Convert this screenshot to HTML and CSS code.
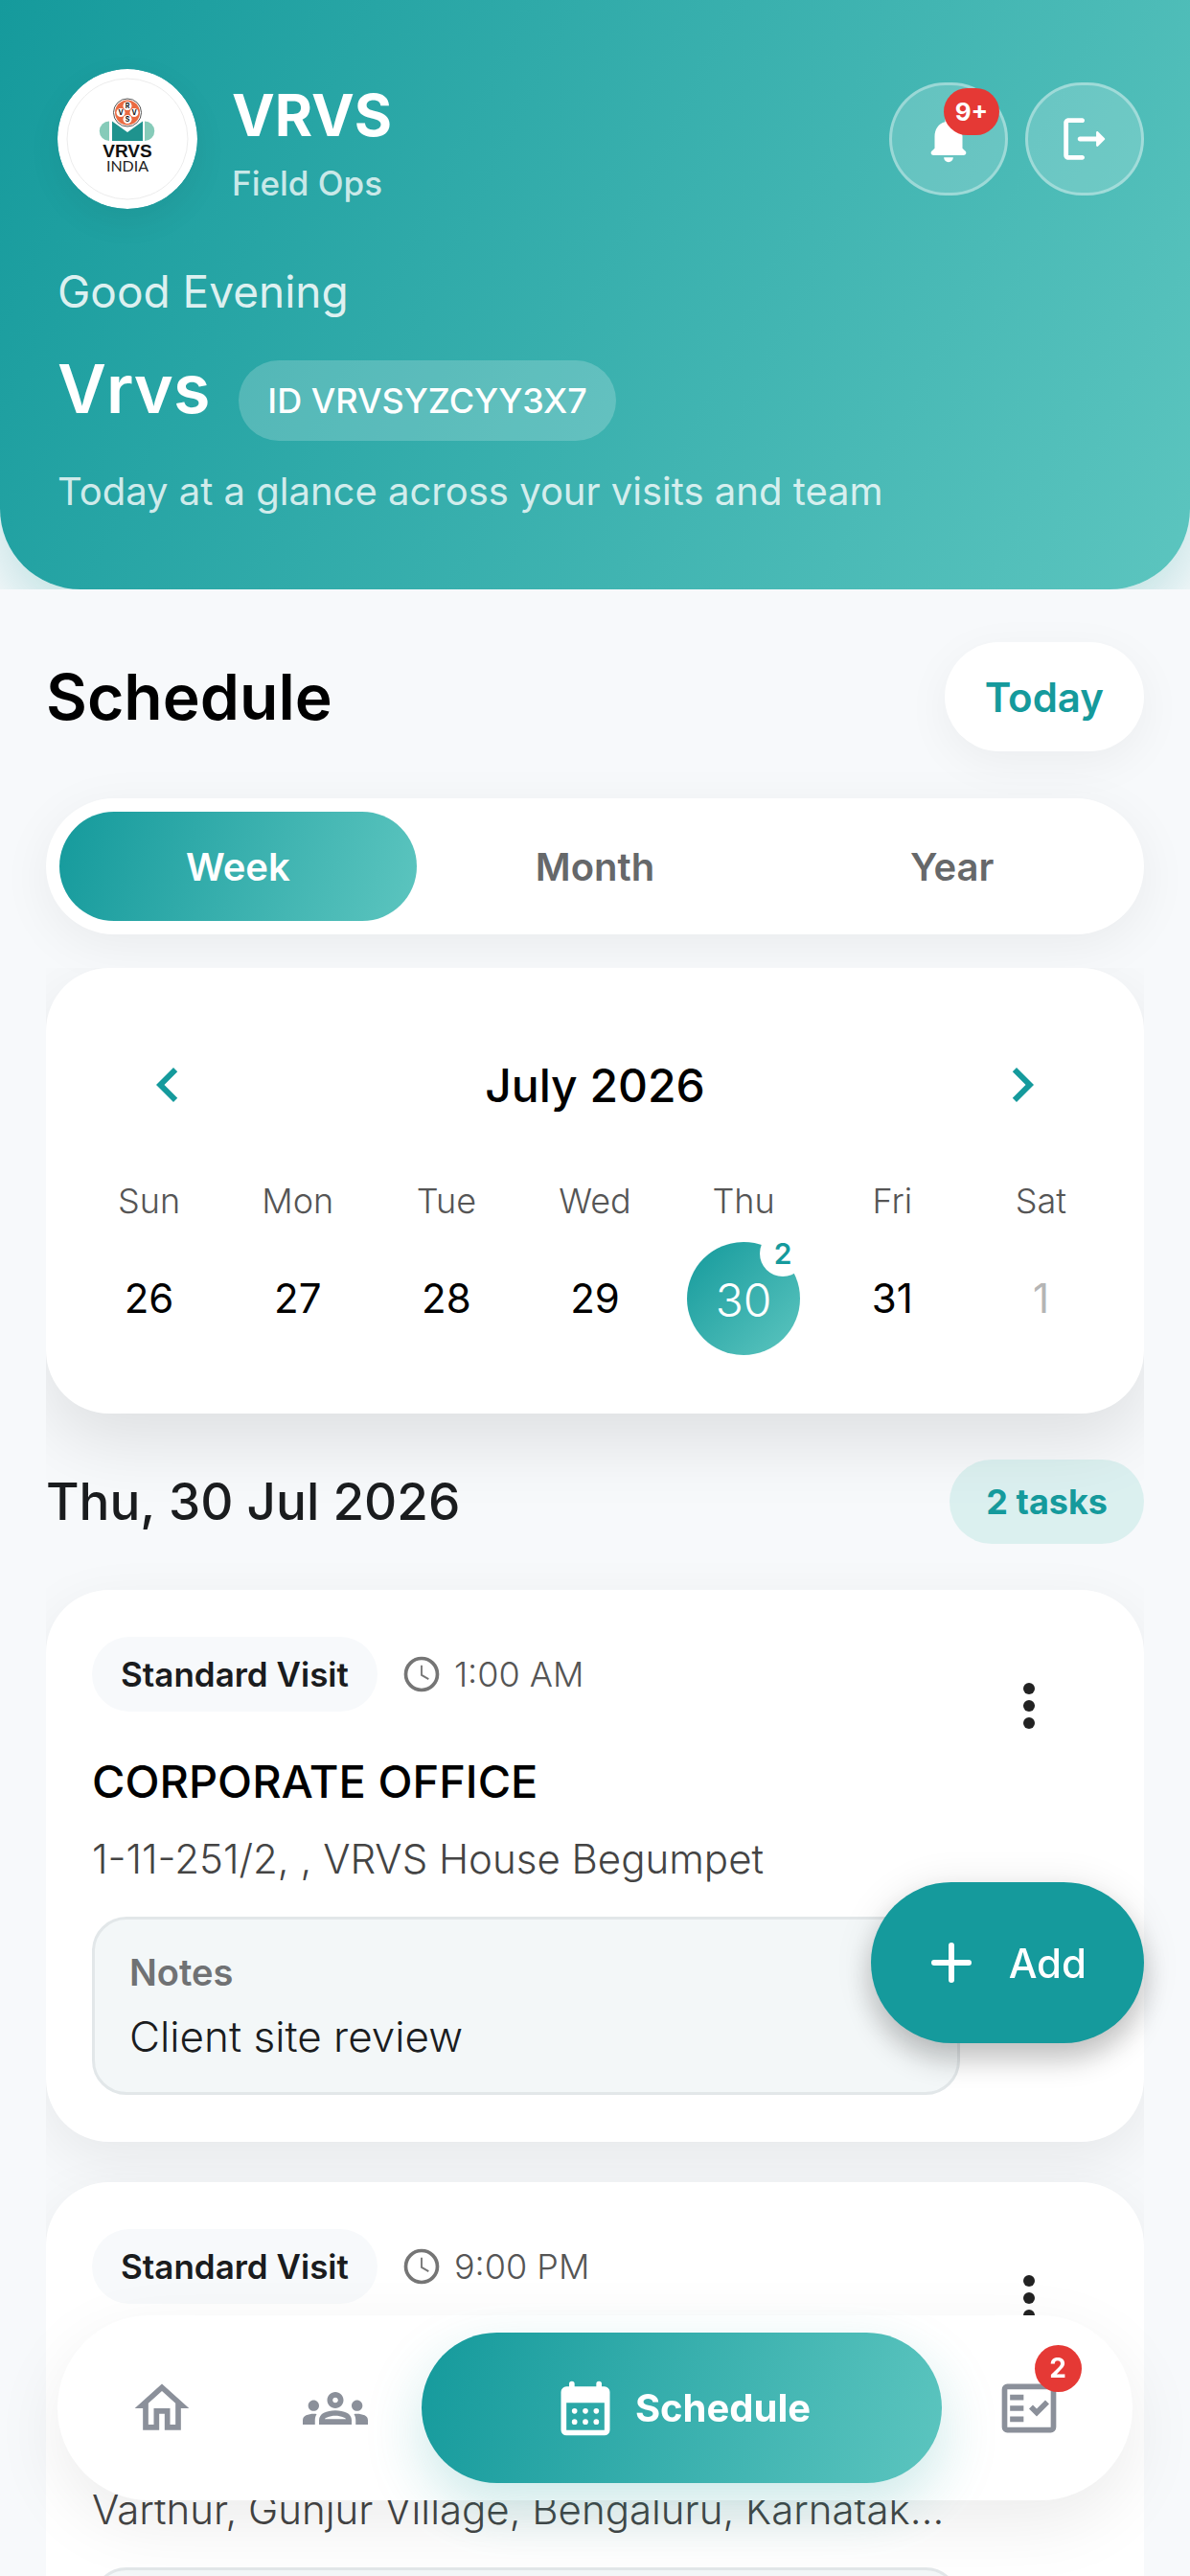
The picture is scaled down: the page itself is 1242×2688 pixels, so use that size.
FILE: index.html
```html
<!DOCTYPE html>
<html lang="en">
<head>
  <meta charset="UTF-8" />
  <meta name="viewport" content="width=device-width, initial-scale=1.0"/>
  <title>Schedule - VRVS Field Ops</title>
  <link rel="stylesheet" href="styles.css">
</head>
<body>

<header class="top">
  <div class="hero">
    <div class="brand-row">
      <svg class="logo" viewBox="0 0 146 146" role="img" aria-label="VRVS India">
        <circle cx="73" cy="73" r="73" fill="#fff"/>
        <circle cx="73" cy="73" r="63" fill="none" stroke="#ececec" stroke-width="1"/>
        <path d="M54 54.500v20.500a10 10 0 0 1 0-20.500z" fill="#86cbb9"/>
        <path d="M91 54.500v20.500a10 10 0 0 0 0-20.500z" fill="#86cbb9"/>
        <path d="M57 54.500L73 66l16-11.500V75H57z" fill="#1f938e"/>
        <circle cx="73" cy="45.500" r="14.500" fill="#fff" stroke="#555" stroke-width="1"/>
        <circle cx="73" cy="45.500" r="13" fill="#ea6a41"/>
        <circle cx="73" cy="38.500" r="4.500" fill="#fff"/>
        <circle cx="66" cy="45.500" r="4.500" fill="#fff"/>
        <circle cx="80" cy="45.500" r="4.500" fill="#fff"/>
        <circle cx="73" cy="52.500" r="4.500" fill="#fff"/>
        <g class="logo-mini">
          <text x="73" y="41">R</text>
          <text x="66" y="48">V</text>
          <text x="80" y="48">V</text>
          <text x="73" y="55">S</text>
        </g>
        <text class="logo-name" x="73" y="92">VRVS</text>
        <text class="logo-country" x="73" y="107">INDIA</text>
      </svg>
      <div class="brand">
        <div class="brand-name">VRVS</div>
        <div class="brand-sub">Field Ops</div>
      </div>
      <div class="actions">
        <button class="round-btn" aria-label="Notifications">
          <svg class="icon-sm" viewBox="0 0 24 24"><path d="M12 22c1.100 0 2-.9 2-2h-4c0 1.100.89 2 2 2zm6-6v-5c0-3.070-1.640-5.640-4.500-6.320V4c0-.83-.67-1.500-1.500-1.500s-1.500.67-1.500 1.500v.68C7.630 5.360 6 7.920 6 11v5l-1.290 1.290c-.63.63-.19 1.710.7 1.710h13.170c.89 0 1.340-1.080.71-1.710L18 16z"/></svg>
          <span class="badge badge-bell">9+</span>
        </button>
        <button class="round-btn" aria-label="Log out">
          <svg class="icon-sm" viewBox="0 0 24 24"><path d="M5 5h6c.55 0 1-.45 1-1s-.45-1-1-1H5c-1.100 0-2 .9-2 2v14c0 1.100.9 2 2 2h6c.55 0 1-.45 1-1s-.45-1-1-1H5V5z"/><path d="M20.650 11.650l-2.790-2.790c-.32-.32-.86-.1-.86.35V11h-7c-.55 0-1 .45-1 1s.45 1 1 1h7v1.790c0 .45.54.67.85.35l2.790-2.790c.2-.19.2-.51.010-.7z"/></svg>
        </button>
      </div>
    </div>
    <p class="greeting">Good Evening</p>
    <div class="user-row">
      <h1 class="user-name">Vrvs</h1>
      <span class="user-id">ID VRVSYZCYY3X7</span>
    </div>
    <p class="tagline">Today at a glance across your visits and team</p>
  </div>
</header>

<main class="page">
  <div class="title-row">
    <h2 class="page-title">Schedule</h2>
    <button class="today-btn">Today</button>
  </div>

  <div class="segment">
    <button class="seg active">Week</button>
    <button class="seg">Month</button>
    <button class="seg">Year</button>
  </div>

  <div class="feed">
    <section class="calendar">
      <div class="month-row">
        <button class="icon-btn" aria-label="Previous week"><svg class="icon-lg" viewBox="0 0 24 24"><path d="M15.410 7.410L14 6l-6 6 6 6 1.410-1.410L10.830 12z"/></svg></button>
        <h3 class="month">July 2026</h3>
        <button class="icon-btn" aria-label="Next week"><svg class="icon-lg" viewBox="0 0 24 24"><path d="M8.590 7.410L10 6l6 6-6 6-1.410-1.410L13.170 12z"/></svg></button>
      </div>
      <table class="week">
        <thead>
          <tr><th>Sun</th><th>Mon</th><th>Tue</th><th>Wed</th><th>Thu</th><th>Fri</th><th>Sat</th></tr>
        </thead>
        <tbody>
          <tr>
            <td>26</td>
            <td>27</td>
            <td>28</td>
            <td>29</td>
            <td><div class="selected">30<span class="day-count">2</span></div></td>
            <td>31</td>
            <td class="outside">1</td>
          </tr>
        </tbody>
      </table>
    </section>

    <div class="date-row">
      <h3 class="date">Thu, 30 Jul 2026</h3>
      <span class="task-count">2 tasks</span>
    </div>

    <article class="visit">
      <div class="visit-body">
        <div class="visit-meta">
          <span class="chip">Standard Visit</span>
          <svg class="clock" viewBox="0 0 24 24"><circle cx="12" cy="12" r="9"/><path d="M12 7v5.500l4 2.300"/></svg>
          <span class="time">1:00 AM</span>
        </div>
        <h4 class="visit-title">CORPORATE OFFICE</h4>
        <p class="address">1-11-251/2, , VRVS House Begumpet</p>
        <div class="notes">
          <div class="notes-label">Notes</div>
          <div class="notes-text">Client site review</div>
        </div>
      </div>
      <button class="menu-btn" aria-label="More"><svg class="icon-lg" viewBox="0 0 24 24"><circle cx="12" cy="6" r="2"/><circle cx="12" cy="12" r="2"/><circle cx="12" cy="18" r="2"/></svg></button>
    </article>

    <article class="visit">
      <div class="visit-body">
        <div class="visit-meta">
          <span class="chip">Standard Visit</span>
          <svg class="clock" viewBox="0 0 24 24"><circle cx="12" cy="12" r="9"/><path d="M12 7v5.500l4 2.300"/></svg>
          <span class="time">9:00 PM</span>
        </div>
        <div class="visit-title two-line"></div>
        <p class="address">Varthur, Gunjur Village, Bengaluru, Karnatak…</p>
        <div class="notes"></div>
      </div>
      <button class="menu-btn" aria-label="More"><svg class="icon-lg" viewBox="0 0 24 24"><circle cx="12" cy="6" r="2"/><circle cx="12" cy="12" r="2"/><circle cx="12" cy="18" r="2"/></svg></button>
    </article>
  </div>
</main>

<button class="fab">
  <svg class="icon-lg" viewBox="0 0 24 24"><path d="M12 6v12M6 12h12"/></svg>
  Add
</button>

<nav class="tabbar">
  <a class="tab" href="#" aria-label="Home">
    <svg class="icon-md" viewBox="0 0 24 24"><path d="M12 5.690l5 4.500V18h-2v-6H9v6H7v-7.810l5-4.500M12 3L2 12h3v8h6v-6h2v6h6v-8h3L12 3z"/></svg>
  </a>
  <a class="tab" href="#" aria-label="Team">
    <svg class="icon-md" viewBox="0 0 24 24"><path d="M4 13c1.100 0 2-.9 2-2s-.9-2-2-2-2 .9-2 2 .9 2 2 2zm1.130 1.100c-.37-.06-.74-.1-1.130-.1-.99 0-1.930.21-2.780.58C.48 14.900 0 15.620 0 16.430V18h4.500v-1.610c0-.83.23-1.610.63-2.290zM20 13c1.100 0 2-.9 2-2s-.9-2-2-2-2 .9-2 2 .9 2 2 2zm4 3.430c0-.81-.48-1.530-1.220-1.850-.85-.37-1.790-.58-2.780-.58-.39 0-.76.04-1.130.1.4.68.63 1.460.63 2.290V18H24v-1.570zm-7.760-2.780c-1.170-.52-2.610-.9-4.240-.9s-3.070.39-4.240.9C6.680 14.130 6 15.210 6 16.390V18h12v-1.610c0-1.180-.68-2.260-1.760-2.740zM8.070 16c.09-.23.13-.39.91-.69.97-.38 1.990-.56 3.020-.56s2.050.18 3.020.56c.77.3.81.46.91.69H8.070zM12 8c.55 0 1 .45 1 1s-.45 1-1 1-1-.45-1-1 .45-1 1-1m0-2c-1.660 0-3 1.340-3 3s1.340 3 3 3 3-1.340 3-3-1.340-3-3-3z"/></svg>
  </a>
  <a class="tab current" href="#">
    <svg class="icon-md" viewBox="0 0 24 24"><path fill-rule="evenodd" d="M8 4h8V3a1 1 0 0 1 2 0v1h1a2 2 0 0 1 2 2v14a2 2 0 0 1-2 2H5a2 2 0 0 1-2-2V6a2 2 0 0 1 2-2h1V3a1 1 0 0 1 2 0zM5 10v10h14V10z"/><circle cx="8" cy="13" r="1"/><circle cx="12" cy="13" r="1"/><circle cx="16" cy="13" r="1"/><circle cx="8" cy="17" r="1"/><circle cx="12" cy="17" r="1"/><circle cx="16" cy="17" r="1"/></svg>
    Schedule
  </a>
  <a class="tab" href="#" aria-label="Tasks">
    <span class="tab-icon">
      <svg class="icon-md" viewBox="0 0 24 24"><path fill-rule="evenodd" d="M4 3h16a2 2 0 0 1 2 2v14a2 2 0 0 1-2 2H4a2 2 0 0 1-2-2V5a2 2 0 0 1 2-2zM4 5v14h16V5z"/><path d="M5 7h5v2H5zM5 11h5v2H5zM5 15h5v2H5zM19.410 10.420L17.990 9l-3.170 3.170-1.410-1.420L12 12.160 14.820 15z"/></svg>
      <span class="badge badge-tab">2</span>
    </span>
  </a>
</nav>

</body>
</html>
```
FILE: styles.css
```css
* {
  box-sizing: border-box;
  margin: 0;
  padding: 0;
}
body {
  font-family: Inter, "Noto Sans", sans-serif;
  background: #f7f9fb;
  color: #000;
  height: 100vh;
  overflow: hidden;
}
button {
  font: inherit;
  border: none;
  background: none;
  cursor: pointer;
}
a {
  text-decoration: none;
}
svg {
  display: block;
  flex: none;
  fill: currentColor;
}
.icon-sm {
  width: 58px;
  height: 58px;
}
.icon-md {
  width: 68px;
  height: 68px;
}
.icon-lg {
  width: 72px;
  height: 72px;
}

/* header */
.top {
  overflow: hidden;
}
.hero {
  padding: 72px 48px 77px 60px;
  color: #fff;
  background: linear-gradient(116deg, #159a9c, #5cc5bf);
  border-radius: 0 0 84px 84px;
  box-shadow: 0 24px 60px rgba(21, 154, 156, 0.25);
}
.brand-row {
  display: flex;
  align-items: center;
}
.logo {
  width: 146px;
  height: 146px;
  border-radius: 50%;
  box-shadow: 0 12px 36px rgba(0, 0, 0, 0.06);
}
.logo-mini {
  font-size: 7px;
  font-weight: 700;
  text-anchor: middle;
  fill: #111;
}
.logo-name {
  font-family: "Liberation Sans", sans-serif;
  font-size: 19px;
  font-weight: 700;
  text-anchor: middle;
  fill: #111;
}
.logo-country {
  font-family: Lato, sans-serif;
  font-size: 16px;
  text-anchor: middle;
  fill: #222;
}
.brand {
  flex: 1;
  margin-left: 36px;
}
.brand-name {
  font-size: 60px;
  font-weight: 700;
  line-height: 86px;
}
.brand-sub {
  margin-top: 6px;
  font-size: 35px;
  font-weight: 500;
  line-height: 44px;
  color: rgba(255, 255, 255, 0.75);
}
.actions {
  display: flex;
  gap: 18px;
}
.round-btn {
  position: relative;
  display: flex;
  align-items: center;
  justify-content: center;
  width: 124px;
  height: 118px;
  color: #fff;
  background: rgba(255, 255, 255, 0.18);
  border: 3px solid rgba(255, 255, 255, 0.35);
  border-radius: 60px;
}
.badge {
  position: absolute;
  height: 49px;
  font-weight: 700;
  line-height: 49px;
  text-align: center;
  color: #fff;
  background: #e53935;
  border-radius: 25px;
}
.badge-bell {
  top: 3px;
  right: 6px;
  width: 58px;
  font-size: 26px;
}
.greeting {
  margin-top: 56px;
  font-size: 46px;
  line-height: 60px;
  color: rgba(255, 255, 255, 0.85);
}
.user-row {
  display: flex;
  align-items: flex-end;
  gap: 30px;
  margin-top: 24px;
}
.user-name {
  margin-bottom: 6px;
  font-size: 70px;
  font-weight: 600;
  line-height: 96px;
}
.user-id {
  padding: 0 30px;
  font-size: 36px;
  font-weight: 500;
  line-height: 84px;
  background: rgba(255, 255, 255, 0.2);
  border-radius: 42px;
}
.tagline {
  margin-top: 28px;
  font-size: 40px;
  line-height: 50px;
  color: rgba(255, 255, 255, 0.8);
}

/* schedule controls */
.page {
  padding: 55px 48px 0;
}
.title-row {
  display: flex;
  align-items: center;
  justify-content: space-between;
}
.page-title {
  font-size: 66px;
  font-weight: 600;
}
.today-btn {
  height: 114px;
  padding: 0 42px;
  font-size: 42px;
  font-weight: 600;
  color: #159a9c;
  background: #fff;
  border-radius: 57px;
  box-shadow: 0 12px 48px rgba(0, 0, 0, 0.05);
}
.segment {
  display: flex;
  margin-top: 49px;
  padding: 14px;
  background: #fff;
  border-radius: 71px;
  box-shadow: 0 12px 54px rgba(0, 0, 0, 0.06);
}
.seg {
  flex: 1;
  height: 114px;
  font-size: 40px;
  font-weight: 600;
  color: #66686a;
  border-radius: 57px;
}
.seg.active {
  color: #fff;
  background: linear-gradient(107deg, #159a9c, #5cc5bf);
}

/* calendar */
.feed {
  margin-top: 35px;
  overflow: hidden;
}
.calendar {
  padding: 64px 30px 49px;
  background: #fff;
  border-radius: 66px;
  box-shadow: 0 30px 72px rgba(0, 0, 0, 0.1);
}
.month-row {
  display: flex;
  align-items: center;
  justify-content: space-between;
  padding: 0 39px;
}
.icon-btn {
  display: flex;
  align-items: center;
  justify-content: center;
  width: 116px;
  height: 116px;
  color: #159a9c;
}
.month {
  font-size: 48px;
  font-weight: 500;
}
.week {
  width: 100%;
  margin-top: 33px;
  table-layout: fixed;
  border-collapse: collapse;
  text-align: center;
}
.week th {
  height: 60px;
  font-size: 36px;
  font-weight: 300;
  color: #555;
}
.week td {
  height: 143px;
  font-size: 42px;
}
.week .outside {
  color: #b5b5b5;
}
.selected {
  position: relative;
  width: 118px;
  height: 118px;
  margin: 0 auto;
  font-size: 48px;
  font-weight: 300;
  line-height: 122px;
  color: #fff;
  background: linear-gradient(135deg, #159a9c, #5cc5bf);
  border-radius: 50%;
}
.day-count {
  position: absolute;
  top: -12px;
  right: -6px;
  width: 48px;
  height: 48px;
  font-size: 30px;
  font-weight: 600;
  line-height: 48px;
  color: #159a9c;
  background: #fff;
  border-radius: 50%;
}

/* visits */
.date-row {
  display: flex;
  align-items: center;
  justify-content: space-between;
  margin: 48px 0;
}
.date {
  font-size: 53px;
  font-weight: 500;
  color: #1a1c1e;
}
.task-count {
  padding: 0 38px;
  font-size: 36px;
  font-weight: 700;
  line-height: 88px;
  color: #159a9c;
  background: rgba(92, 197, 191, 0.18);
  border-radius: 44px;
}
.visit {
  display: grid;
  grid-template-columns: minmax(0, 1fr) 144px;
  align-items: start;
  margin-bottom: 42px;
  padding: 49px 48px;
  background: #fff;
  border-radius: 66px;
  box-shadow: 0 18px 60px rgba(0, 0, 0, 0.07);
}
.visit-meta {
  display: flex;
  align-items: center;
}
.chip {
  padding: 0 30px;
  font-size: 35px;
  font-weight: 600;
  line-height: 78px;
  color: #1a1c1e;
  background: #f7f9fb;
  border-radius: 39px;
}
.clock {
  width: 44px;
  height: 44px;
  margin: 0 12px 0 24px;
  fill: none;
  stroke: #757575;
  stroke-width: 2;
}
.clock path {
  stroke-width: 1;
}
.time {
  font-size: 36px;
  font-weight: 300;
  color: #555;
}
.visit-title {
  margin-top: 42px;
  font-size: 47px;
  font-weight: 500;
  line-height: 61px;
}
.two-line {
  min-height: 122px;
}
.address {
  margin-top: 21px;
  overflow: hidden;
  font-size: 42px;
  font-weight: 300;
  line-height: 60px;
  white-space: nowrap;
  text-overflow: ellipsis;
  color: #444;
}
.notes {
  min-height: 186px;
  margin-top: 30px;
  padding: 30px 36px;
  background: #f3f7f8;
  border: 3px solid #e2e7e9;
  border-radius: 36px;
}
.notes-label {
  font-size: 38px;
  font-weight: 600;
  line-height: 50px;
  color: #707274;
}
.notes-text {
  margin-top: 14px;
  font-size: 44px;
  font-weight: 300;
  line-height: 56px;
  color: #1a1c1e;
}
.menu-btn {
  display: flex;
  align-items: center;
  justify-content: center;
  height: 144px;
  color: #222;
}

/* floating controls */
.fab {
  position: fixed;
  right: 48px;
  bottom: 556px;
  display: flex;
  align-items: center;
  gap: 24px;
  height: 168px;
  padding: 0 60px 0 48px;
  font-size: 42px;
  font-weight: 500;
  color: #fff;
  background: #159a9c;
  border-radius: 84px;
  box-shadow: 0 18px 30px rgba(0, 0, 0, 0.2), 0 3px 40px rgba(0, 0, 0, 0.1);
}
.fab svg {
  stroke: currentColor;
  stroke-width: 2;
  stroke-linecap: round;
}
.tabbar {
  position: fixed;
  right: 60px;
  bottom: 79px;
  left: 60px;
  display: flex;
  padding: 18px;
  background: #fff;
  border-radius: 97px;
  box-shadow: 0 24px 72px rgba(0, 0, 0, 0.08);
}
.tab {
  flex: 1;
  display: flex;
  align-items: center;
  justify-content: center;
  height: 157px;
  color: #8b909a;
}
.tab.current {
  flex: 3;
  gap: 18px;
  font-size: 40px;
  font-weight: 700;
  color: #fff;
  background: linear-gradient(106deg, #159a9c, #5cc5bf);
  border-radius: 79px;
  box-shadow: 0 24px 60px rgba(21, 154, 156, 0.22);
}
.tab-icon {
  position: relative;
}
.badge-tab {
  top: -32px;
  right: -21px;
  width: 49px;
  font-size: 28px;
}
```
